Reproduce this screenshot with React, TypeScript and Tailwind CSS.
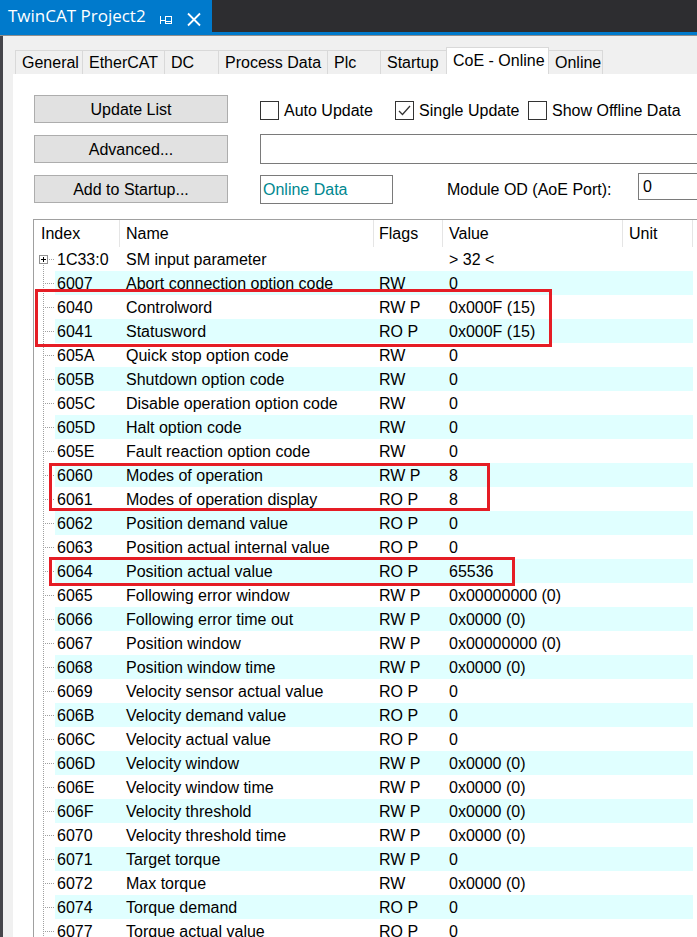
import React from 'react';

const rows: [string, string, string, string][] = [
  ["1C33:0", "SM input parameter", "", "> 32 <"],
  ["6007", "Abort connection option code", "RW", "0"],
  ["6040", "Controlword", "RW P", "0x000F (15)"],
  ["6041", "Statusword", "RO P", "0x000F (15)"],
  ["605A", "Quick stop option code", "RW", "0"],
  ["605B", "Shutdown option code", "RW", "0"],
  ["605C", "Disable operation option code", "RW", "0"],
  ["605D", "Halt option code", "RW", "0"],
  ["605E", "Fault reaction option code", "RW", "0"],
  ["6060", "Modes of operation", "RW P", "8"],
  ["6061", "Modes of operation display", "RO P", "8"],
  ["6062", "Position demand value", "RO P", "0"],
  ["6063", "Position actual internal value", "RO P", "0"],
  ["6064", "Position actual value", "RO P", "65536"],
  ["6065", "Following error window", "RW P", "0x00000000 (0)"],
  ["6066", "Following error time out", "RW P", "0x0000 (0)"],
  ["6067", "Position window", "RW P", "0x00000000 (0)"],
  ["6068", "Position window time", "RW P", "0x0000 (0)"],
  ["6069", "Velocity sensor actual value", "RO P", "0"],
  ["606B", "Velocity demand value", "RO P", "0"],
  ["606C", "Velocity actual value", "RO P", "0"],
  ["606D", "Velocity window", "RW P", "0x0000 (0)"],
  ["606E", "Velocity window time", "RW P", "0x0000 (0)"],
  ["606F", "Velocity threshold", "RW P", "0x0000 (0)"],
  ["6070", "Velocity threshold time", "RW P", "0x0000 (0)"],
  ["6071", "Target torque", "RW P", "0"],
  ["6072", "Max torque", "RW", "0x0000 (0)"],
  ["6074", "Torque demand", "RO P", "0"],
  ["6077", "Torque actual value", "RO P", "0"],
];

const tabs = [
  { label: "General", w: "w-[68px]" },
  { label: "EtherCAT", w: "w-[82px]" },
  { label: "DC", w: "w-[54px]" },
  { label: "Process Data", w: "w-[109px]" },
  { label: "Plc", w: "w-[53px]" },
  { label: "Startup", w: "w-[65px]" },
  { label: "CoE - Online", w: "w-[103px]", active: true },
  { label: "Online", w: "w-[54px]" },
];

const dash = { stroke: "#a0a0a0", strokeDasharray: "1 1" };

const Tree = ({ first }: { first: boolean }) => (
  <svg width="21" height="24" className="shrink-0" shapeRendering="crispEdges">
    {first ? (
      <>
        <rect x="5.5" y="8.5" width="8" height="8" fill="white" stroke="#919191" />
        <line x1="7" y1="12.5" x2="12" y2="12.5" stroke="#000" />
        <line x1="9.5" y1="10" x2="9.5" y2="15" stroke="#000" />
        <line x1="15" y1="12.5" x2="21" y2="12.5" {...dash} />
        <line x1="9.5" y1="18" x2="9.5" y2="24" {...dash} />
      </>
    ) : (
      <>
        <line x1="9.5" y1="0" x2="9.5" y2="24" {...dash} />
        <line x1="11" y1="12.5" x2="21" y2="12.5" {...dash} />
      </>
    )}
  </svg>
);

const Check = ({ label, checked, w }: { label: string; checked?: boolean; w: string }) => (
  <div className={`flex items-center gap-[5px] ${w}`}>
    <div className="w-[19px] h-[19px] border border-[#333333] bg-white flex items-center justify-center">
      {checked && (
        <svg width="15" height="15" viewBox="0 0 15 15">
          <polyline points="2,8 5.5,11.5 13,3" fill="none" stroke="#333333" strokeWidth="1.3" />
        </svg>
      )}
    </div>
    <span className="pt-[1px]">{label}</span>
  </div>
);

const Btn = ({ children }: { children: React.ReactNode }) => (
  <div className="w-[194px] h-[28px] shrink-0 bg-[#e1e1e1] border border-[#adadad] pt-[1px] flex items-center justify-center">
    {children}
  </div>
);

export default function App() {
  return (
    <div className="w-[697px] h-[937px] overflow-hidden bg-[#f0f0f0] flex flex-col font-['Liberation_Sans',Arial,sans-serif] text-[16px] text-black">
      {/* title bar */}
      <div className="h-[32px] bg-[#2d2d30] flex shrink-0">
        <div className="w-[212px] bg-[#007acc] flex items-center pl-[8px] text-white font-['Open_Sans',sans-serif] text-[17px]">
          <span className="w-[150px] whitespace-nowrap">TwinCAT Project2</span>
          <svg width="16" height="32" viewBox="0 0 16 32" shapeRendering="crispEdges">
            <line x1="2.5" y1="16" x2="2.5" y2="24" stroke="white" />
            <line x1="2" y1="20.5" x2="7" y2="20.5" stroke="white" />
            <rect x="7.5" y="16.5" width="6" height="7" fill="none" stroke="white" />
            <line x1="8" y1="21.5" x2="13" y2="21.5" stroke="white" />
          </svg>
          <svg width="20" height="32" viewBox="0 0 20 32" className="ml-[11px]">
            <line x1="3" y1="13.5" x2="15" y2="25.5" stroke="white" strokeWidth="1.8" />
            <line x1="15" y1="13.5" x2="3" y2="25.5" stroke="white" strokeWidth="1.8" />
          </svg>
        </div>
      </div>
      <div className="h-[3px] bg-[#007acc] shrink-0" />
      <div className="h-px bg-[#8e8e8e] shrink-0" />

      {/* body */}
      <div className="flex-1 flex flex-col border-l-[3px] border-[#45454a] pl-[10px] pt-[11px] min-h-0">
        <div className="h-[27px] flex items-end pl-[2px] shrink-0">
          {tabs.map((t, i) =>
            t.active ? (
              <div key={i} className={`${t.w} h-[27px] bg-white border-t border-l border-r border-[#d9d9d9] pl-[6px] flex items-center whitespace-nowrap`}>
                {t.label}
              </div>
            ) : (
              <div
                key={i}
                className={`${t.w} h-[24px] border-t border-[#d9d9d9] pl-[6px] flex items-center whitespace-nowrap ${
                  i === 0 ? "border-l" : ""
                } ${i === 5 ? "" : "border-r"}`}
              >
                {t.label}
              </div>
            )
          )}
        </div>

        <div className="flex-1 bg-white flex flex-col pt-[21px] pl-[21px] min-h-0">
          <div className="flex flex-col gap-[12px] shrink-0">
            <div className="h-[28px] flex items-center">
              <Btn>Update List</Btn>
              <div className="ml-[32px] mt-[3px] flex items-center whitespace-nowrap">
                <Check label="Auto Update" w="w-[135px]" />
                <Check label="Single Update" checked w="w-[133px]" />
                <Check label="Show Offline Data" w="w-[200px]" />
              </div>
            </div>
            <div className="h-[28px] flex items-center">
              <Btn>Advanced...</Btn>
              <div className="ml-[32px] w-[460px] h-[30px] shrink-0 border border-[#7a7a7a] bg-white" />
            </div>
            <div className="h-[28px] flex items-center whitespace-nowrap">
              <Btn>Add to Startup...</Btn>
              <div className="ml-[32px] w-[133px] h-[29px] shrink-0 border border-[#7a7a7a] pl-[2px] pt-[1px] flex items-center text-[#00878f]">
                Online Data
              </div>
              <span className="ml-[54px] w-[191px] shrink-0 pt-[2px]">Module OD (AoE Port):</span>
              <div className="w-[100px] h-[27px] shrink-0 self-start -mt-[2px] border border-[#7a7a7a] pl-[4px] flex items-center">
                0
              </div>
            </div>
          </div>

          {/* object list */}
          <div className="relative mt-[16px] -ml-px flex-1 border-t border-l border-[#a0a0a0] whitespace-nowrap">
            <div className="h-[27px] flex">
              <div className="w-[86px] pl-[7px] pt-[1px] border-r border-[#e5e5e5] flex items-center">Index</div>
              <div className="w-[254px] pl-[6px] pt-[1px] border-r border-[#e5e5e5] flex items-center">Name</div>
              <div className="w-[69px] pl-[5px] pt-[1px] border-r border-[#e5e5e5] flex items-center">Flags</div>
              <div className="w-[180px] pl-[6px] pt-[1px] border-r border-[#e5e5e5] flex items-center">Value</div>
              <div className="w-[70px] pl-[6px] pt-[1px] border-r border-[#e5e5e5] flex items-center">Unit</div>
            </div>
            {rows.map((r, i) => (
              <div key={i} className="h-[24px] flex">
                <Tree first={i === 0} />
                <div className={`w-[638px] pt-[1px] flex items-center ${i % 2 === 1 ? "bg-[#e0ffff]" : ""}`}>
                  <div className="w-[65px] pl-[2px]">{r[0]}</div>
                  <div className="w-[254px] pl-[6px]">{r[1]}</div>
                  <div className="w-[69px] pl-[5px]">{r[2]}</div>
                  <div className="w-[180px] pl-[6px]">{r[3]}</div>
                  <div className="w-[70px]" />
                </div>
              </div>
            ))}

            {/* highlight boxes */}
            <div className="absolute left-[1px] top-[69px] w-[517px] h-[58px] border-[3px] border-[#e51d25] pointer-events-none" />
            <div className="absolute left-[15px] top-[243px] w-[441px] h-[48px] border-[3px] border-[#e51d25] pointer-events-none" />
            <div className="absolute left-[15px] top-[337px] w-[466px] h-[29px] border-[3px] border-[#e51d25] pointer-events-none" />
          </div>
        </div>
      </div>
    </div>
  );
}
